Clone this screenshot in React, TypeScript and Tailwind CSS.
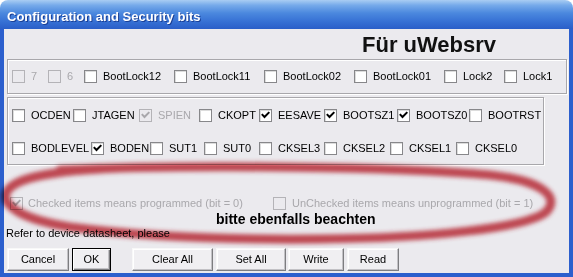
import React from "react";

type Item = { l: string; w: string; c?: boolean; d?: boolean };

function Box({ checked, disabled }: { checked?: boolean; disabled?: boolean }) {
  return (
    <span
      className={
        disabled
          ? "relative block shrink-0 w-[13px] h-[13px] border border-[#b4b3b7] bg-[#ebeaee]"
          : "relative block shrink-0 w-[13px] h-[13px] border border-[#87878a] bg-white shadow-[inset_1px_1px_0_#dcdcdc]"
      }
    >
      {checked && (
        <svg className="absolute left-0 top-0" width="11" height="11" viewBox="0 0 11 11">
          <path
            d="M2.5 4.8 L4.5 7 L8.6 2.8"
            fill="none"
            stroke={disabled ? "#a9a8ac" : "#000"}
            strokeWidth="2"
            strokeLinecap="square"
          />
        </svg>
      )}
    </span>
  );
}

function Check({ item }: { item: Item }) {
  return (
    <div className={"flex items-center shrink-0 " + item.w}>
      <Box checked={item.c} disabled={item.d} />
      <span
        className={
          item.d
            ? "ml-[6px] text-[11px] leading-[13px] text-[#a9a8ac] whitespace-nowrap"
            : "ml-[6px] text-[11px] leading-[13px] text-black whitespace-nowrap"
        }
      >
        {item.l}
      </span>
    </div>
  );
}

const row1: Item[] = [
  { l: "7", w: "w-[36px]", d: true },
  { l: "6", w: "w-[36px]", d: true },
  { l: "BootLock12", w: "w-[90px]" },
  { l: "BootLock11", w: "w-[90px]" },
  { l: "BootLock02", w: "w-[90px]" },
  { l: "BootLock01", w: "w-[90px]" },
  { l: "Lock2", w: "w-[60px]" },
  { l: "Lock1", w: "" },
];

const row2: Item[] = [
  { l: "OCDEN", w: "w-[61px]" },
  { l: "JTAGEN", w: "w-[66px]" },
  { l: "SPIEN", w: "w-[60px]", c: true, d: true },
  { l: "CKOPT", w: "w-[60px]" },
  { l: "EESAVE", w: "w-[65px]", c: true },
  { l: "BOOTSZ1", w: "w-[73px]", c: true },
  { l: "BOOTSZ0", w: "w-[72px]", c: true },
  { l: "BOOTRST", w: "" },
];

const row3: Item[] = [
  { l: "BODLEVEL", w: "w-[79px]" },
  { l: "BODEN", w: "w-[59px]", c: true },
  { l: "SUT1", w: "w-[54px]" },
  { l: "SUT0", w: "w-[55px]" },
  { l: "CKSEL3", w: "w-[65px]" },
  { l: "CKSEL2", w: "w-[66px]" },
  { l: "CKSEL1", w: "w-[66px]" },
  { l: "CKSEL0", w: "" },
];

const btn =
  "h-[23px] shrink-0 flex items-center justify-center text-[11px] text-black bg-[#f0eff2] border border-t-[#f8f8f8] border-l-[#f8f8f8] border-r-[#7d7d80] border-b-[#7d7d80] shadow-[inset_-1px_-1px_0_#c2c1c5,inset_1px_1px_0_#ffffff]";

export default function App() {
  return (
    <div className="relative w-[573px] h-[277px] bg-white overflow-hidden font-['Liberation_Sans',Arial,sans-serif]">
      <div className="flex flex-col w-full h-full">
        {/* title bar */}
        <div className="h-[29px] shrink-0 rounded-t-[8px] flex items-center pl-[7px] pt-[3px] bg-[linear-gradient(to_bottom,#a9cdf3_0%,#76aaea_18%,#4b88de_45%,#3670d4_75%,#2a5ec8_100%)]">
          <span className="text-white font-bold text-[13px] leading-none [text-shadow:1px_1px_0_#1a3f95]">
            Configuration and Security bits
          </span>
        </div>
        {/* body */}
        <div className="flex-1 flex flex-col bg-[#ebeaee] border-l-[4px] border-r-[4px] border-b-[4px] border-[#2c5fcd]">
          <div className="h-[30px] shrink-0 pl-[358px] pt-[5px]">
            <span className="text-[22px] leading-[22px] font-bold text-[#111]">Für uWebsrv</span>
          </div>
          {/* group 1 */}
          <div className="ml-[3px] w-[560px] h-[35px] shrink-0 flex items-center pl-[4px] border border-[#a8a7ab] shadow-[inset_1px_1px_0_#ffffff,1px_1px_0_#ffffff]">
            {row1.map((it) => (
              <Check key={it.l} item={it} />
            ))}
          </div>
          {/* group 2 */}
          <div className="ml-[3px] mt-[3px] w-[537px] h-[68px] shrink-0 flex flex-col pl-[4px] pt-[11px] gap-[20px] border border-[#a8a7ab] shadow-[inset_1px_1px_0_#ffffff,1px_1px_0_#ffffff]">
            <div className="flex items-center h-[13px]">
              {row2.map((it) => (
                <Check key={it.l} item={it} />
              ))}
            </div>
            <div className="flex items-center h-[13px]">
              {row3.map((it) => (
                <Check key={it.l} item={it} />
              ))}
            </div>
          </div>
          {/* legend */}
          <div className="mt-[32px] h-[13px] flex items-center pl-[6px]">
            <div className="flex items-center w-[263px] shrink-0">
              <Box checked disabled />
              <span className="ml-[5px] text-[11px] leading-[13px] text-[#a9a8ac] whitespace-nowrap">
                Checked items means programmed (bit = 0)
              </span>
            </div>
            <div className="flex items-center shrink-0">
              <Box disabled />
              <span className="ml-[6px] text-[11px] leading-[13px] text-[#a9a8ac] whitespace-nowrap">
                UnChecked items means unprogrammed (bit = 1)
              </span>
            </div>
          </div>
          <div className="mt-[2px] h-[14px] pl-[212px] text-[14px] leading-[14px] font-bold text-black whitespace-nowrap">
            bitte ebenfalls beachten
          </div>
          <div className="mt-[1px] h-[13px] pl-[2px] text-[11px] leading-[13px] text-black whitespace-nowrap">
            Refer to device datasheet, please
          </div>
          {/* buttons */}
          <div className="mt-[8px] flex pl-[3px]">
            <button className={btn + " w-[62px]"}>Cancel</button>
            <button className="ml-[3px] w-[39px] h-[23px] shrink-0 flex items-center justify-center text-[11px] text-black bg-[#f0eff2] border border-black shadow-[inset_1px_1px_0_#ffffff,inset_-1px_-1px_0_#7d7d80,inset_-2px_-2px_0_#c2c1c5]">
              OK
            </button>
            <button className={btn + " ml-[21px] w-[81px]"}>Clear All</button>
            <button className={btn + " ml-[3px] w-[70px]"}>Set All</button>
            <button className={btn + " ml-[2px] w-[56px]"}>Write</button>
            <button className={btn + " ml-[3px] w-[52px]"}>Read</button>
          </div>
        </div>
      </div>
      {/* red hand-drawn ellipse */}
      <svg
        className="absolute left-0 top-0 pointer-events-none mix-blend-multiply"
        width="573"
        height="277"
        viewBox="0 0 573 277"
      >
        <defs>
          <filter id="blur" x="-10%" y="-50%" width="120%" height="200%">
            <feGaussianBlur stdDeviation="2.2" />
          </filter>
        </defs>
        <path
          d="M60 170 C200 164 400 167 490 175 C545 181 560 198 546 212 C526 228 430 238 320 239 C220 240 130 235 70 227 C20 219 2 205 6 193 C12 180 40 171 120 168"
          fill="none"
          stroke="#c62f3b"
          strokeOpacity="0.85"
          strokeWidth="9"
          strokeLinecap="round"
          filter="url(#blur)"
        />
      </svg>
    </div>
  );
}
